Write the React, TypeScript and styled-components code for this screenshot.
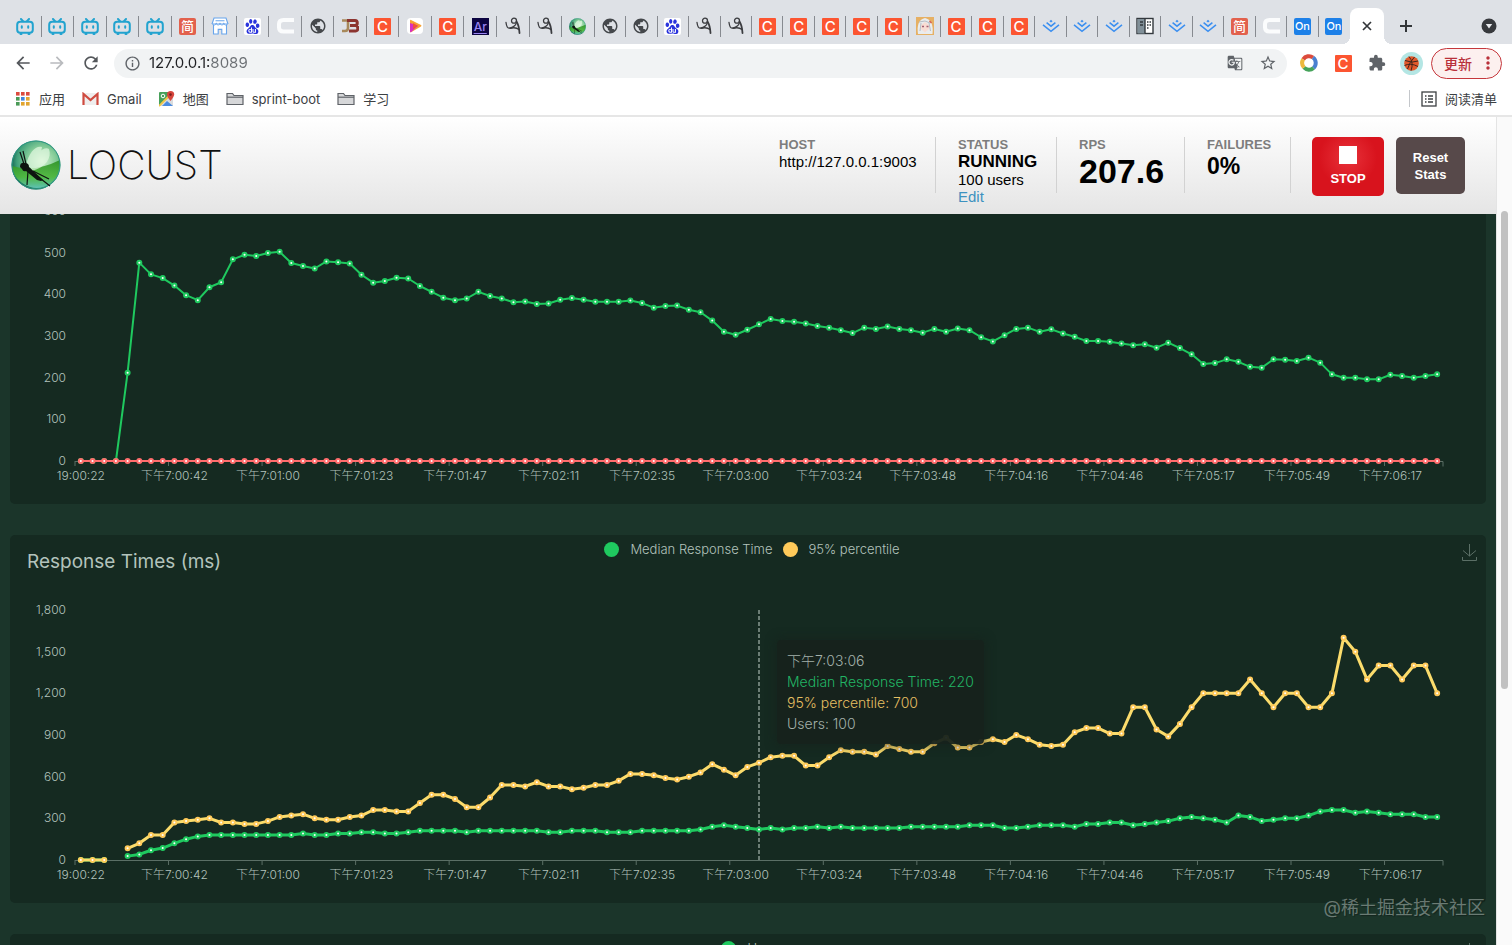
import React, { useLayoutEffect, useRef, useState } from "react";
import styled, { createGlobalStyle } from "styled-components";
import {
  MdArrowBack,
  MdArrowForward,
  MdRefresh,
  MdInfoOutline,
  MdStarBorder,
  MdExtension,
  MdGTranslate,
  MdMoreVert,
  MdPublic,
} from "react-icons/md";
import { SiBaidu } from "react-icons/si";

const UI_FONT = `Inter, "Noto Sans CJK SC", sans-serif`;
const PAGE_FONT = `"Liberation Sans", Arial, sans-serif`;

const GREEN = "#1fc95f";
const RED = "#ff6d6d";
const YELLOW = "#ffca5a";

const GlobalStyle = createGlobalStyle`
  *, *::before, *::after { box-sizing: border-box; }
  body { margin: 0; background: #1b352a; overflow: hidden; }
  button, input { font: inherit; margin: 0; padding: 0; border: 0; background: none; color: inherit; }
  svg { display: block; }
`;

/* ---------- Browser frame ---------- */

const Browser = styled.div`
  display: flex;
  flex-direction: column;
  height: 100vh;
  font-family: ${UI_FONT};
  color: #3c4043;
`;

const TabStrip = styled.div`
  display: flex;
  height: 44px;
  padding-left: 9px;
  background: #dee1e6;
`;

const TabGroup = styled.div<{ $grow: number }>`
  display: flex;
  flex: ${(p) => p.$grow} 1 0;
  align-items: center;
  padding-top: 8px;
`;

const Tab = styled.button`
  flex: 1 1 0;
  display: flex;
  align-items: center;
  justify-content: center;
  height: 21px;
  border-right: 1px solid #878a90;
  &[data-last="true"] { border-right-color: transparent; }
`;

const ActiveTab = styled.button`
  position: relative;
  width: 34px;
  height: 36px;
  align-self: flex-end;
  display: flex;
  align-items: center;
  justify-content: center;
  border-radius: 8px 8px 0 0;
  background: #fff;
  &::before, &::after {
    content: "";
    position: absolute;
    bottom: 0;
    width: 8px;
    height: 8px;
  }
  &::before { left: -8px; background: radial-gradient(circle at 0 0, transparent 8px, #fff 8px); }
  &::after { right: -8px; background: radial-gradient(circle at 100% 0, transparent 8px, #fff 8px); }
`;

const StripEnd = styled.div`
  width: 128px;
  display: flex;
  align-items: center;
  justify-content: space-between;
  padding: 8px 15px 0 15px;
`;

const BareButton = styled.button`
  display: flex;
  align-items: center;
  justify-content: center;
`;

const Toolbar = styled.div`
  display: flex;
  align-items: center;
  height: 38px;
  padding: 0 10px 0 13px;
  background: #fff;
`;

const NavButtons = styled.div`
  display: flex;
  gap: 14px;
  width: 101px;
  color: #54575b;
`;

const Omnibox = styled.label`
  flex: 1;
  display: flex;
  align-items: center;
  gap: 8px;
  height: 29px;
  padding: 0 10px;
  border-radius: 15px;
  background: #f1f3f4;
  color: #5f6368;
`;

const UrlInput = styled.input`
  flex: 1;
  min-width: 0;
  outline: 0;
  font-size: 15px;
  line-height: 20px;
  background: linear-gradient(90deg, #202124 62px, #6b6f73 62px);
  background-clip: text;
  -webkit-background-clip: text;
  -webkit-text-fill-color: transparent;
`;

const OmniboxActions = styled.span`
  display: flex;
  align-items: center;
  gap: 16px;
`;

const Extensions = styled.div`
  display: flex;
  align-items: center;
  gap: 10px;
  margin: 0 8px 0 10px;
  color: #5f6368;
`;

const ExtensionButton = styled(BareButton)`
  width: 24px;
  height: 24px;
`;

const UpdateButton = styled.button`
  display: flex;
  align-items: center;
  justify-content: space-between;
  width: 71px;
  height: 31px;
  padding: 0 3px 0 12px;
  border: 1px solid #c5373c;
  border-radius: 16px;
  background: #fcf0ef;
  color: #b9313a;
  font-size: 14px;
  font-weight: 500;
`;

const Bookmarks = styled.div`
  display: flex;
  align-items: center;
  gap: 17px;
  height: 35px;
  padding: 0 15px;
  border-bottom: 2px solid #e6e6e6;
  background: #fff;
  font-size: 13px;
  line-height: 18px;
`;

const Bookmark = styled.a`
  display: flex;
  align-items: center;
  gap: 8px;
  color: #3c4043;
  text-decoration: none;
`;

const ReadingList = styled.button`
  display: flex;
  align-items: center;
  gap: 8px;
  height: 17px;
  margin-left: auto;
  padding-left: 11px;
  border-left: 1px solid #c4c7cb;
  font-size: 13px;
`;

/* ---------- Favicons ---------- */

const IconTile = styled.span<{ $bg: string; $fg: string; $size?: number; $radius?: number }>`
  display: flex;
  align-items: center;
  justify-content: center;
  width: 17px;
  height: 17px;
  border-radius: ${(p) => p.$radius ?? 2}px;
  background: ${(p) => p.$bg};
  color: ${(p) => p.$fg};
  font-size: ${(p) => p.$size ?? 12}px;
  font-weight: 500;
  line-height: 17px;
`;

const Bilibili = () => (
  <svg width="18" height="17" viewBox="0 0 18 17" fill="none" stroke="#22a3cf" strokeWidth="2" strokeLinecap="round">
    <rect x="1.2" y="3.8" width="15.6" height="11" rx="3" />
    <path d="M5 1l2 2.2M13 1l-2 2.2M5.8 8.3v1.4M12.2 8.3v1.4M4.5 16h1M12.5 16h1" />
  </svg>
);

const Jian = () => <IconTile $bg="#e2614d" $fg="#fff" $size={13}>简</IconTile>;
const Csdn = () => <IconTile $bg="#fc5531" $fg="#fff" $size={15} $radius={1}>C</IconTile>;
const OnFav = () => <IconTile $bg="#1d80e8" $fg="#fff" $size={11}>On</IconTile>;

const Store = () => (
  <svg width="18" height="18" viewBox="0 0 18 18" fill="#fff" stroke="#68a5ec" strokeWidth="1.1">
    <path d="M3 1h12l1.8 5.5H1.2z" />
    <path d="M2.5 7.5V17h4.700v-4.600h3.600V17h4.700V7.5" />
    <path d="M1.2 6.5q2 3 4 0q2 3 3.800 0q2 3 3.800 0q2 3 4 0M4.500 3.800h9" />
  </svg>
);

const BaiduFav = () => (
  <IconTile $bg="#fff" $fg="#2a34dc"><SiBaidu size={15} /></IconTile>
);

const WhiteC = () => (
  <svg width="18" height="18" viewBox="0 0 18 18" fill="none" stroke="#fbfcfd" strokeWidth="4">
    <path d="M18 3H7.500Q3 3 3 7v3.500Q3 14.500 7.500 14.500H18" />
  </svg>
);

const Globe = () => <MdPublic size={18} color="#45484c" />;

const Jb = () => (
  <svg width="18" height="18" viewBox="0 0 18 18" fill="none">
    <path d="M1 3.500h6v7.500q0 3-3 3H1" stroke="#a8895b" strokeWidth="2.600" />
    <path d="M6 3.500h8q2.300 0 2.300 2.500T14 8.500H9h5.500q2.300 0 2.300 2.800T14.500 14H8" stroke="#8c3430" strokeWidth="3" />
  </svg>
);

const PlayFav = () => (
  <svg width="18" height="18" viewBox="0 0 18 18">
    <rect x="1" y="1" width="16" height="16" rx="4" fill="#fff" />
    <path d="M4 3.500q0-1 1-.6L15 8q1 .8 0 1.600L5 15.200q-1 .3-1-.7z" fill="#f7a234" />
    <path d="M4 6l8 2.800L5 15.200q-1 .3-1-.7z" fill="#d92fc0" />
    <path d="M7 6l5 3-5 3z" fill="#f0523b" />
  </svg>
);

const ArTile = styled(IconTile)`
  text-decoration: underline;
  text-underline-offset: 2px;
`;
const Ar = () => <ArTile $bg="#0d0542" $fg="#9a84f2" $size={12} $radius={0}>Ar</ArTile>;

const Script = () => (
  <svg width="16" height="18" viewBox="0 0 16 18" fill="none" stroke="#3b3c40" strokeWidth="1.300" strokeLinecap="round">
    <path d="M1 5.500C1.500 9 2.200 11.300 4 11.200 6.500 11 11 9 11.500 5.500" />
    <circle cx="9" cy="3.700" r="2.500" />
    <path d="M11.500 4.500c2 3 2.700 7 3 11.500" strokeWidth="1.800" />
    <path d="M5 11.300c3-.8 6-1.300 9 1.200" />
  </svg>
);

const Bug = ({ size }: { size: number }) => (
  <svg width={size} height={size} viewBox="0 0 50 50">
    <defs>
      <radialGradient id={`orb${size}`} cx="62%" cy="42%" r="64%">
        <stop offset="0" stopColor="#d4f2d0" />
        <stop offset="0.45" stopColor="#84cc98" />
        <stop offset="0.8" stopColor="#3f9f79" />
        <stop offset="1" stopColor="#12604e" />
      </radialGradient>
      <linearGradient id={`glow${size}`} x1="0" y1="0" x2="0" y2="1">
        <stop offset="0" stopColor="#2b8f22" stopOpacity="0.9" />
        <stop offset="0.6" stopColor="#4fb83c" stopOpacity="0.9" />
        <stop offset="1" stopColor="#5ec2b4" />
      </linearGradient>
    </defs>
    <circle cx="25" cy="25" r="24.500" fill={`url(#orb${size})`} />
    <path d="M1 26q22 7 48-6 1 14-9 23-14 10-29 0Q1 36 1 26z" fill={`url(#glow${size})`} />
    <circle cx="25" cy="25" r="24" fill="none" stroke="#2c9484" strokeWidth="1" />
    <path d="M15 25C18 12 25 5 31 7c-1 8-6 16-13 21zM19 27C24 14 33 6 38 9c3 9-3 18-17 22z" fill="#e4fae2" opacity="0.7" />
    <path d="M9 27q0-5 5-4 4 0 4 4l14 13-2 1-4-1-11-9q-3 1-4-2z" fill="#0e1410" />
    <path d="M13 24L9 12M15 24l-3-13M17 31l-1 14M25 35l14 11M22 31l16 8" stroke="#0e1410" strokeWidth="1.200" fill="none" />
  </svg>
);

const Anime = () => (
  <svg width="18" height="18" viewBox="0 0 18 18">
    <rect width="18" height="18" fill="#e6b064" />
    <path d="M2 17Q0 3 9 1q9 2 7.500 16z" fill="#e9ecee" />
    <path d="M5 8l4-3 4 3v4l-4 3.500L5 12z" fill="#f8dcd3" />
    <path d="M6 9.500h2M10.500 9.500h2" stroke="#a35f72" strokeWidth="1.300" />
    <path d="M3 5l6-1 5 2M5 6l-1 8M13 6l1.500 8" stroke="#b6bdc4" fill="none" />
    <path d="M13.500 4l2 2" stroke="#d85d50" strokeWidth="1.500" />
  </svg>
);

const Juejin = () => (
  <svg width="18" height="14" viewBox="0 0 18 14" fill="none" stroke="#3b8ff0" strokeWidth="1.500">
    <path d="M9 .8l1.600 1.400L9 3.500 7.400 2.200z" fill="#3b8ff0" stroke="none" />
    <path d="M4.600 3.600L9 7.200l4.400-3.600M1 5.800l8 6.500 8-6.500" />
  </svg>
);

const Door = () => (
  <svg width="18" height="18" viewBox="0 0 18 18">
    <rect x="1" y="1.500" width="16" height="15" fill="#fff" stroke="#33383d" strokeWidth="1.400" />
    <path d="M1.500 2H9v14.500H1.500z" fill="#819099" />
    <path d="M9 1.500v15" stroke="#33383d" strokeWidth="1.400" />
    <path d="M4 5h3M4 8h3M11 5h1.500M13.500 5H15M11 8h1.500M13.500 8H15M11 11h1.500" stroke="#33383d" strokeWidth="1.600" />
  </svg>
);

const icons: Record<string, React.ComponentType> = {
  b: Bilibili, j: Jian, s: Store, d: BaiduFav, w: WhiteC, g: Globe, i: Jb, c: Csdn,
  p: PlayFav, a: Ar, y: Script, l: () => <Bug size={17} />, m: Anime, u: Juejin, r: Door, o: OnFav,
};
const names: Record<string, string> = {
  b: "Bilibili", j: "Jianshu", s: "Store", d: "Baidu", w: "Site", g: "Page", i: "JB", c: "CSDN",
  p: "Video", a: "Adobe", y: "Script", l: "Locust", m: "Anime", u: "Juejin", r: "Docs", o: "On",
};
const leftTabs = "bbbbbjsdwgicpcayyl";
const rightTabs = "ggdyycccccmcccuuuruujwoo";

/* ---------- Toolbar drawings ---------- */

const ColorRing = () => (
  <svg width="18" height="18" viewBox="0 0 18 18" fill="none" strokeWidth="4">
    <path d="M3.200 5.400A6.800 6.800 0 0 1 13 3.500" stroke="#dc4b3c" />
    <path d="M13 3.500A6.800 6.800 0 0 1 13.500 14" stroke="#4a80d0" />
    <path d="M13.500 14A6.800 6.800 0 0 1 4 13.500" stroke="#45a35a" />
    <path d="M4 13.500A6.800 6.800 0 0 1 3.200 5.400" stroke="#ecb93e" />
  </svg>
);

const Ball = () => (
  <svg width="23" height="23" viewBox="0 0 23 23">
    <circle cx="11.500" cy="11.500" r="11.500" fill="#b4e6e4" />
    <circle cx="11.500" cy="11.500" r="7.300" fill="#e2592b" />
    <path d="M5 8.500q7 3 13 .5M4.500 13.500q6-3 13.500 1M9 4.500q5 6 2 14.200M14.500 5q-5 5-7 12" stroke="#40251d" strokeWidth="1" fill="none" />
  </svg>
);

const AppsGrid = () => (
  <svg width="16" height="16" viewBox="0 0 16 16">
    {["#dc4b3e", "#dc4b3e", "#dc4b3e", "#4a9a57", "#4285dc", "#e2a52f", "#4a9a57", "#e2a52f", "#e2a52f"].map((c, i) => (
      <rect key={i} x={1 + (i % 3) * 5} y={1 + Math.floor(i / 3) * 5} width="3.600" height="3.600" fill={c} />
    ))}
  </svg>
);

const GmailIcon = () => (
  <svg width="17" height="14" viewBox="0 0 17 14">
    <path d="M1 1h15v12H1z" fill="#efeeee" />
    <path d="M1.500 13V2l7 6 7-6v11" fill="none" stroke="#cf4b40" strokeWidth="2.200" />
  </svg>
);

const MapsIcon = () => (
  <svg width="16" height="16" viewBox="0 0 16 16">
    <rect x="0" y="1" width="14" height="14" rx="1" fill="#47a05a" />
    <path d="M0 15L14 2v13z" fill="#d9dcdf" />
    <path d="M3 15l5-5 6 5z" fill="#4a8be0" />
    <path d="M0 15L12 3" stroke="#f3c648" strokeWidth="1.800" />
    <circle cx="4" cy="5" r="1.800" fill="none" stroke="#fff" />
    <path d="M11.500 10Q8 6 8 3.600a3.600 3.600 0 0 1 7.200 0Q15 6 11.500 10z" fill="#d6453c" />
    <circle cx="11.500" cy="3.600" r="1.300" fill="#7d1f1b" />
  </svg>
);

const FolderIcon = () => (
  <svg width="18" height="14" viewBox="0 0 18 14" stroke="#5f6368" strokeWidth="1.200">
    <path d="M1 12.500V1.500h5.500l1.500 2h9v9z" fill="#d6d7d9" />
    <path d="M1 5.200h16" />
  </svg>
);

const ListIcon = () => (
  <svg width="16" height="16" viewBox="0 0 16 16" fill="none" stroke="#3c4043" strokeWidth="1.300">
    <rect x="1" y="1" width="14" height="14" />
    <path d="M4 5h1.500M7 5h5M4 8h1.500M7 8h5M4 11h1.500M7 11h5" />
  </svg>
);

/* ---------- Locust page ---------- */

const Viewport = styled.div`
  position: relative;
  flex: 1;
  display: flex;
  min-height: 0;
  background: #1b352a;
`;

const Page = styled.main`
  flex: 1;
  min-width: 0;
  overflow: hidden;
`;

const Scrollbar = styled.div`
  width: 16px;
  padding: 94px 4px 0;
  background: #fafafa;
  border-left: 1px solid #e4e4e4;
`;

const Thumb = styled.div`
  height: 478px;
  border-radius: 4px;
  background: #c1c1c1;
`;

const Header = styled.header`
  position: relative;
  z-index: 2;
  display: flex;
  align-items: flex-start;
  height: 97px;
  padding: 20px 31px 0 11px;
  background: linear-gradient(#fff, #e5e5e5);
  color: #000;
  font-family: ${PAGE_FONT};
`;

const Brand = styled.a`
  display: flex;
  align-items: center;
  gap: 6px;
  height: 55px;
  margin-right: auto;
  color: #111;
  text-decoration: none;
  font-family: ${UI_FONT};
  font-size: 39px;
  font-weight: 200;
`;

const Stat = styled.section<{ $width: number }>`
  width: ${(p) => p.$width}px;
  height: 56px;
  margin-left: 22px;
  border-right: 1px solid #d2d2d2;
  white-space: nowrap;
`;

const StatLabel = styled.div`
  color: #7d7d7d;
  font-size: 13px;
  font-weight: 700;
  line-height: 16px;
`;

const StatText = styled.div`
  font-size: 15px;
  line-height: 17px;
  a { color: #3d92c0; text-decoration: none; }
`;

const StatValue = styled.div<{ $size: number; $line: number }>`
  font-size: ${(p) => p.$size}px;
  line-height: ${(p) => p.$line}px;
  font-weight: 700;
`;

const ActionButton = styled.button<{ $tone: "stop" | "reset" }>`
  display: flex;
  flex-direction: column;
  align-items: center;
  justify-content: center;
  gap: ${(p) => (p.$tone === "stop" ? 6 : 0)}px;
  width: ${(p) => (p.$tone === "stop" ? 72 : 69)}px;
  height: ${(p) => (p.$tone === "stop" ? 59 : 57)}px;
  margin-left: ${(p) => (p.$tone === "stop" ? 21 : 12)}px;
  border-radius: 5px;
  background: ${(p) => (p.$tone === "stop" ? "radial-gradient(circle at 50% 35%, #e8323a, #d8131d 55%)" : "#57494a")};
  color: #fff;
  font-size: 13px;
  font-weight: 700;
  line-height: 17px;
`;

const StopSquare = styled.span`
  width: 18px;
  height: 18px;
  background: #fff;
`;

const Charts = styled.div`
  display: flex;
  flex-direction: column;
  gap: 31px;
  margin-top: -78px;
  padding: 0 10px;
`;

const Panel = styled.section`
  position: relative;
  flex: none;
  height: 368px;
  border-radius: 5px;
  background: #152a21;
  color: #b3c3bc;
`;

const PanelHead = styled.div`
  display: grid;
  grid-template-columns: 1fr auto 1fr;
  align-items: start;
  height: 56px;
  padding: 5px 9px 0 17px;
`;

const Title = styled.h2`
  margin: 0;
  padding-top: 10px;
  font-size: 19px;
  font-weight: 400;
  line-height: 24px;
`;

const Legend = styled.ul`
  grid-column: 2;
  display: flex;
  gap: 10px;
  margin: 0;
  padding: 0;
  list-style: none;
  font-size: 13px;
  font-weight: 300;
  line-height: 18px;
`;

const LegendItem = styled.li<{ $color: string }>`
  display: flex;
  align-items: center;
  gap: 11px;
  &::before {
    content: "";
    width: 15px;
    height: 15px;
    border-radius: 50%;
    background: ${(p) => p.$color};
  }
`;

const SaveButton = styled(BareButton)`
  grid-column: 3;
  justify-self: end;
  padding-top: 4px;
`;

const Plot = styled.svg`
  width: 100%;
  height: 312px;
  font-size: 12px;
  font-weight: 300;
  text { fill: #b3c3bc; }
`;

const Tooltip = styled.div`
  position: absolute;
  top: 105px;
  padding: 10px;
  border-radius: 4px;
  background: rgba(22, 34, 28, 0.95);
  box-shadow: 0 0 8px 3px rgba(22, 34, 28, 0.5);
  font-size: 14px;
  font-weight: 300;
  line-height: 21px;
  white-space: nowrap;
`;

const TipLine = styled.div<{ $color?: string }>`
  color: ${(p) => p.$color ?? "#a3b1aa"};
`;

const Watermark = styled.div`
  position: absolute;
  right: 27px;
  bottom: 24px;
  color: rgba(190, 200, 195, 0.5);
  font-size: 18px;
  font-weight: 400;
  line-height: 26px;
  text-shadow: 1px 1px 1px rgba(0, 0, 0, 0.3);
`;

/* ---------- Data ---------- */

const rps = [
  0, 0, 0, 0, 212, 476, 448, 439, 421, 398, 386, 417, 429, 484, 495, 492, 499, 502, 475, 468, 462, 479, 477, 474, 447,
  428, 432, 440, 438, 420, 406, 392, 386, 390, 406, 396, 390, 381, 383, 377, 378, 387, 391, 387, 382, 382, 382, 385,
  379, 368, 372, 373, 363, 357, 337, 310, 303, 315, 328, 341, 336, 334, 330, 324, 320, 314, 307, 320, 317, 323, 317,
  314, 308, 317, 310, 318, 314, 297, 287, 302, 317, 320, 310, 316, 306, 298, 288, 288, 286, 282, 278, 280, 272, 284,
  271, 256, 233, 235, 244, 238, 226, 224, 244, 243, 240, 248, 236, 208, 200, 200, 196, 196, 207, 204, 200, 204, 208,
];
const failures = rps.map(() => 0);

const p95: (number | null)[] = [
  0, 0, 0, null, 84, 120, 180, 180, 270, 280, 290, 300, 270, 270, 260, 260, 280, 310, 320, 330, 300, 290, 290, 310,
  320, 360, 360, 350, 350, 410, 470, 470, 440, 380, 380, 450, 540, 540, 530, 560, 530, 530, 510, 520, 540, 540, 570,
  620, 620, 610, 590, 580, 600, 630, 690, 650, 610, 670, 700, 740, 750, 750, 680, 680, 740, 790, 780, 780, 760, 820,
  800, 780, 780, 840, 880, 810, 810, 850, 870, 850, 900, 870, 830, 820, 830, 920, 950, 950, 910, 910, 1100, 1100, 940,
  890, 980, 1100, 1200, 1200, 1200, 1200, 1300, 1200, 1100, 1200, 1200, 1100, 1100, 1200, 1600, 1500, 1300, 1400,
  1400, 1300, 1400, 1400, 1200,
];
const median: (number | null)[] = [
  0, 0, 0, null, 28, 40, 70, 86, 120, 150, 170, 180, 180, 180, 180, 180, 180, 180, 180, 190, 180, 180, 190, 190, 200,
  200, 190, 190, 200, 210, 210, 210, 210, 200, 210, 210, 210, 210, 210, 210, 200, 200, 210, 210, 210, 200, 200, 200,
  210, 210, 210, 210, 210, 220, 240, 250, 240, 230, 220, 230, 220, 230, 230, 240, 230, 240, 230, 230, 230, 230, 230,
  240, 240, 240, 240, 240, 250, 250, 250, 230, 230, 240, 250, 250, 250, 240, 260, 260, 270, 270, 250, 260, 270, 280,
  300, 310, 300, 290, 270, 320, 310, 280, 290, 300, 300, 320, 350, 360, 360, 340, 350, 340, 330, 330, 330, 310, 310,
];

const times = [
  "19:00:22", "下午7:00:42", "下午7:01:00", "下午7:01:23", "下午7:01:47", "下午7:02:11", "下午7:02:35", "下午7:03:00",
  "下午7:03:24", "下午7:03:48", "下午7:04:16", "下午7:04:46", "下午7:05:17", "下午7:05:49", "下午7:06:17",
];

/* ---------- Chart ---------- */

type Series = { name: string; color: string; line?: string; width: number; values: (number | null)[] };

const LEFT = 65;
const RIGHT = 43;
const TOP = 19;
const BASE = 269;

type ChartProps = {
  title?: string;
  legend?: boolean;
  series: Series[];
  max: number;
  step: number;
  hover?: number;
};

const Chart = ({ title, legend, series, max, step, hover }: ChartProps) => {
  const ref = useRef<HTMLElement>(null);
  const [width, setWidth] = useState(1476);

  useLayoutEffect(() => {
    const el = ref.current;
    if (!el) return;
    const update = () => setWidth(el.clientWidth);
    update();
    const observer = new ResizeObserver(update);
    observer.observe(el);
    return () => observer.disconnect();
  }, []);

  const count = series[0].values.length;
  const band = (width - LEFT - RIGHT) / count;
  const x = (i: number) => LEFT + band * (i + 0.5);
  const y = (v: number) => BASE - (v / max) * (BASE - TOP);

  const path = (values: (number | null)[]) =>
    values
      .map((v, i) => (v === null ? "" : `${i === 0 || values[i - 1] === null ? "M" : "L"}${x(i)} ${y(v)}`))
      .join("");

  const ticks: number[] = [];
  for (let v = 0; v <= max; v += step) ticks.push(v);

  return (
    <Panel ref={ref}>
      <PanelHead>
        {title && <Title>{title}</Title>}
        {legend && (
          <Legend>
            {series.map((s) => (
              <LegendItem key={s.name} $color={s.color}>{s.name}</LegendItem>
            ))}
          </Legend>
        )}
        <SaveButton aria-label="Save as image">
          <svg width="15" height="18" viewBox="0 0 15 18" fill="none" stroke="#5b6f66">
            <path d="M7.500 0v12M1 6.500l6.500 5.500L14 6.500M.5 13v3.500h14V13" />
          </svg>
        </SaveButton>
      </PanelHead>
      {count > 0 && (
        <Plot>
          {ticks.map((v) => (
            <text key={v} x={LEFT - 9} y={y(v) + 4} textAnchor="end">{v.toLocaleString("en-US")}</text>
          ))}
          <path
            d={`M${LEFT} ${BASE + 0.5}H${width - RIGHT}v5` + times.map((_, k) => `M${LEFT + band * 8 * k} ${BASE}v5`).join("")}
            stroke="#5b6f66"
            fill="none"
          />
          {times.map((t, k) => (
            <text key={t} x={x(k * 8)} y={BASE + 19} textAnchor="middle">{t}</text>
          ))}
          {hover !== undefined && (
            <path d={`M${x(hover)} ${TOP}V${BASE}`} stroke="#c3d0ca" strokeDasharray="4 2" />
          )}
          {series.map((s) => (
            <g key={s.name} stroke={s.color} strokeWidth="2">
              <path d={path(s.values)} stroke={s.line ?? s.color} strokeWidth={s.width} fill="none" strokeLinejoin="bevel" />
              {s.values.map((v, i) => v !== null && <circle key={i} cx={x(i)} cy={y(v)} r="2" fill="#fff" />)}
            </g>
          ))}
        </Plot>
      )}
      {hover !== undefined && (
        <Tooltip style={{ left: x(hover) + 18 }}>
          <TipLine>下午7:03:06</TipLine>
          <TipLine $color="#22b565">Median Response Time: 220</TipLine>
          <TipLine $color="#e5bf62">95% percentile: 700</TipLine>
          <TipLine>Users: 100</TipLine>
        </Tooltip>
      )}
    </Panel>
  );
};

const Tabs = ({ codes, grow }: { codes: string; grow: number }) => (
  <TabGroup $grow={grow}>
    {codes.split("").map((c, i) => {
      const Icon = icons[c];
      return (
        <Tab key={i} aria-label={names[c]} data-last={codes === rightTabs && i === codes.length - 1}>
          <Icon />
        </Tab>
      );
    })}
  </TabGroup>
);

export default function App() {
  return (
    <Browser>
      <GlobalStyle />
      <TabStrip>
        <Tabs codes={leftTabs} grow={586} />
        <Tabs codes={rightTabs} grow={756} />
        <ActiveTab aria-label="Close tab">
          <svg width="10" height="10" viewBox="0 0 10 10" stroke="#333639" strokeWidth="1.700"><path d="M1 1l8 8M9 1L1 9" /></svg>
        </ActiveTab>
        <StripEnd>
          <BareButton aria-label="New tab">
            <svg width="14" height="14" viewBox="0 0 14 14" stroke="#333639" strokeWidth="2"><path d="M7 1v12M1 7h12" /></svg>
          </BareButton>
          <BareButton aria-label="Search tabs">
            <svg width="16" height="16" viewBox="0 0 16 16"><circle cx="8" cy="8" r="7.500" fill="#37393d" /><path d="M4.800 6h6.400L8 10.500z" fill="#e9ebee" /></svg>
          </BareButton>
        </StripEnd>
      </TabStrip>

      <Toolbar>
        <NavButtons>
          <BareButton aria-label="Back"><MdArrowBack size={20} /></BareButton>
          <BareButton aria-label="Forward"><MdArrowForward size={20} color="#b9bbbe" /></BareButton>
          <BareButton aria-label="Reload"><MdRefresh size={20} /></BareButton>
        </NavButtons>
        <Omnibox>
          <MdInfoOutline size={17} />
          <UrlInput defaultValue="127.0.0.1:8089" aria-label="Address" />
          <OmniboxActions>
            <BareButton aria-label="Translate"><MdGTranslate size={16} /></BareButton>
            <BareButton aria-label="Bookmark"><MdStarBorder size={18} /></BareButton>
          </OmniboxActions>
        </Omnibox>
        <Extensions>
          <ExtensionButton aria-label="Colour ring"><ColorRing /></ExtensionButton>
          <ExtensionButton aria-label="CSDN"><Csdn /></ExtensionButton>
          <ExtensionButton aria-label="Extensions"><MdExtension size={18} /></ExtensionButton>
          <ExtensionButton aria-label="Profile"><Ball /></ExtensionButton>
        </Extensions>
        <UpdateButton>更新<MdMoreVert size={20} /></UpdateButton>
      </Toolbar>

      <Bookmarks>
        <Bookmark href="#"><AppsGrid />应用</Bookmark>
        <Bookmark href="#"><GmailIcon />Gmail</Bookmark>
        <Bookmark href="#"><MapsIcon />地图</Bookmark>
        <Bookmark href="#"><FolderIcon />sprint-boot</Bookmark>
        <Bookmark href="#"><FolderIcon />学习</Bookmark>
        <ReadingList><ListIcon />阅读清单</ReadingList>
      </Bookmarks>

      <Viewport>
        <Page>
          <Header>
            <Brand href="#"><Bug size={50} />LOCUST</Brand>
            <Stat $width={157}>
              <StatLabel>HOST</StatLabel>
              <StatText>http://127.0.0.1:9003</StatText>
            </Stat>
            <Stat $width={99}>
              <StatLabel>STATUS</StatLabel>
              <StatValue $size={17} $line={18}>RUNNING</StatValue>
              <StatText>100 users</StatText>
              <StatText><a href="#">Edit</a></StatText>
            </Stat>
            <Stat $width={106}>
              <StatLabel>RPS</StatLabel>
              <StatValue $size={34} $line={36}>207.6</StatValue>
            </Stat>
            <Stat $width={84}>
              <StatLabel>FAILURES</StatLabel>
              <StatValue $size={23} $line={26}>0%</StatValue>
            </Stat>
            <ActionButton $tone="stop"><StopSquare />STOP</ActionButton>
            <ActionButton $tone="reset"><span>Reset</span><span>Stats</span></ActionButton>
          </Header>
          <Charts>
            <Chart
              max={600}
              step={100}
              series={[
                { name: "RPS", color: GREEN, width: 2, values: rps },
                { name: "Failures/s", color: RED, width: 2, values: failures },
              ]}
            />
            <Chart
              title="Response Times (ms)"
              legend
              max={1800}
              step={300}
              hover={58}
              series={[
                { name: "Median Response Time", color: GREEN, width: 3, values: median },
                { name: "95% percentile", color: YELLOW, line: "#fbdc6c", width: 3, values: p95 },
              ]}
            />
            <Chart legend max={100} step={20} series={[{ name: "Users", color: GREEN, width: 2, values: [] }]} />
          </Charts>
        </Page>
        <Scrollbar><Thumb /></Scrollbar>
        <Watermark>@稀土掘金技术社区</Watermark>
      </Viewport>
    </Browser>
  );
}
